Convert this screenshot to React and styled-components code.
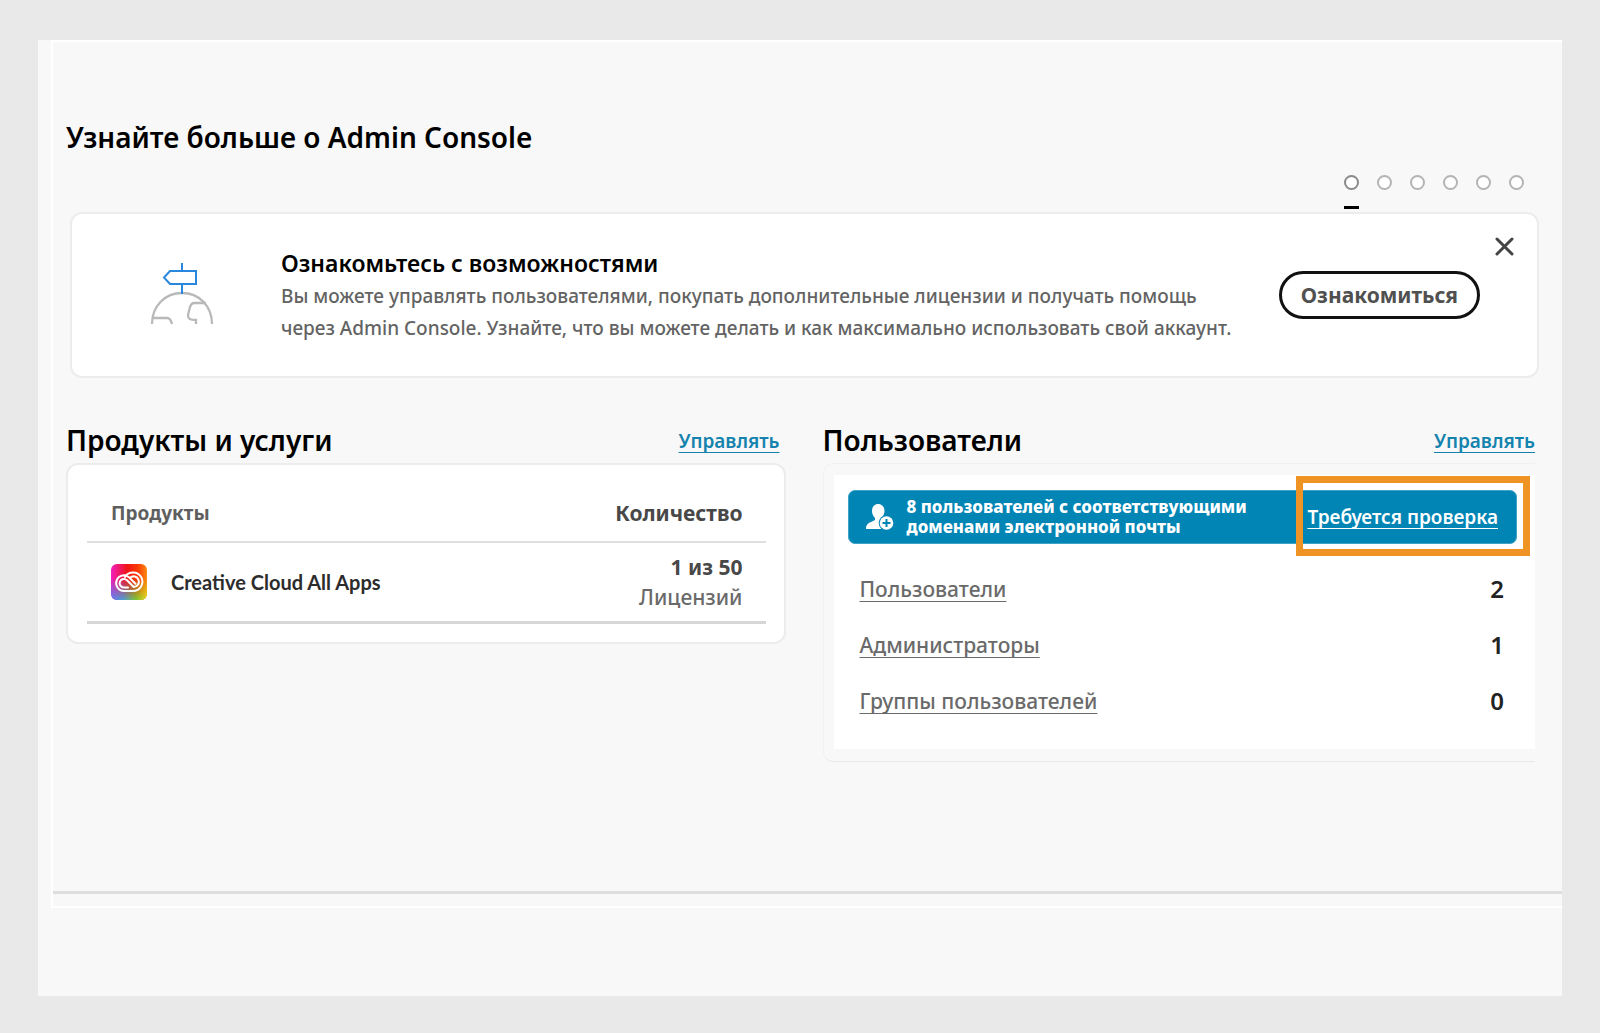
import React from "react";
import styled, { createGlobalStyle, css } from "styled-components";

const GlobalStyle = createGlobalStyle`
  *, *::before, *::after { box-sizing: border-box; }
  body {
    margin: 0;
    background: #e9e9e9;
    font-family: "Noto Sans", "Open Sans", sans-serif;
    color: #000;
  }
  h1, h2, h3, p, ul, dl, dd { margin: 0; padding: 0; }
`;

const Page = styled.div`
  min-height: 100vh;
  padding: 40px 38px 37px;
`;

const Sheet = styled.div`
  background: #f8f8f8;
  padding: 0 0 88px 13px;
`;

const Main = styled.main`
  border: 2px solid #fff;
  border-right: 0;
  padding-bottom: 12px;
`;

const Content = styled.div`
  padding: 73px 23px 129px 13px;
  border-bottom: 3px solid #dedede;
`;

const Heading = styled.h2`
  font-size: 28px;
  line-height: 45px;
  font-weight: 600;
`;

const Pager = styled.nav`
  display: flex;
  justify-content: flex-end;
  gap: 18px;
  padding: 15px 15px 0 0;
`;

const PagerDot = styled.button`
  display: flex;
  flex-direction: column;
  justify-content: space-between;
  height: 34px;
  width: 15px;
  padding: 0;
  border: 0;
  background: none;
  color: ${(p) => (p.$active ? "#8a8a8a" : "#b4b4b4")};

  &::before {
    content: "";
    width: 15px;
    height: 15px;
    border: 2px solid currentColor;
    border-radius: 50%;
    background: #fff;
  }
  &::after {
    content: "";
    width: 15px;
    height: 3px;
    background: ${(p) => (p.$active ? "#000" : "transparent")};
  }
`;

const card = css`
  background: #fff;
  border: 2px solid #ececec;
  border-radius: 12px;
`;

const Intro = styled.section`
  ${card}
  display: flex;
  align-items: center;
  position: relative;
  height: 166px;
  margin: 3px 0 0 4px;
  padding: 0 57px 0 78px;
`;

const IntroText = styled.div`
  flex: 1;
  padding-left: 67px;
`;

const IntroTitle = styled.h3`
  font-size: 23px;
  line-height: 34px;
  font-weight: 600;
`;

const IntroBody = styled.p`
  font-size: 19px;
  line-height: 32px;
  font-weight: 500;
  color: #636363;
`;

const PillButton = styled.button`
  height: 48px;
  padding: 0 19px;
  border: 3px solid #111;
  border-radius: 24px;
  background: #fff;
  font: 700 21px/28px "Noto Sans", "Open Sans", sans-serif;
  color: #505050;
`;

const CloseButton = styled.button`
  position: absolute;
  top: 22px;
  right: 22px;
  display: flex;
  padding: 0;
  border: 0;
  background: none;
`;

const Columns = styled.div`
  display: grid;
  grid-template-columns: 718fr 715fr;
  gap: 37px;
  margin-top: 40px;
  align-items: start;
`;

const ColumnHead = styled.header`
  display: flex;
  align-items: center;
  justify-content: space-between;
  padding-right: ${(p) => p.$inset || 0}px;
`;

const TextLink = styled.a`
  font-size: ${(p) => p.$size || 19}px;
  line-height: 24px;
  font-weight: ${(p) => p.$weight || 500};
  color: ${(p) => p.$color || "#1483ad"};
  text-decoration: underline;
  text-decoration-thickness: 1px;
  text-underline-offset: 4px;
  text-decoration-skip-ink: none;
`;

const ProductsCard = styled.div`
  ${card}
  height: 181px;
  padding: 19px 18px 0 19px;
`;

const Table = styled.table`
  width: 100%;
  border-collapse: collapse;

  th, td { padding: 0 23px 0 24px; text-align: left; }
  th:last-child, td:last-child { text-align: right; }
  tr > * { border-bottom: 2px solid #dfdfdf; }
  thead tr { height: 58px; }
  tbody tr { height: 80px; }
  tbody tr > * { border-bottom: 3px solid #d6d6d6; }
`;

const Th = styled.th`
  font-size: ${(p) => p.$size}px;
  font-weight: 700;
  color: ${(p) => p.$color};
`;

const Product = styled.div`
  display: flex;
  align-items: center;
  gap: 24px;
  font: 700 20px/28px Lato, "Noto Sans", sans-serif;
  color: #2c2c2c;
`;

const Quantity = styled.div`
  font-size: 21px;
  line-height: 30px;
  font-weight: ${(p) => (p.$strong ? 700 : 500)};
  color: ${(p) => (p.$strong ? "#484848" : "#6a6a6a")};
`;

const UsersFrame = styled.div`
  border: 1px solid #f1f1f1;
  border-right: 0;
  border-bottom-color: #e8e8e8;
  border-radius: 10px 0 0 10px;
  margin-right: 4px;
  padding: 11px 0 12px 10px;
`;

const UsersCard = styled.div`
  background: #fff;
  height: 274px;
  padding: 15px 18px 0 14px;
`;

const Banner = styled.div`
  display: flex;
  align-items: center;
  position: relative;
  height: 54px;
  padding: 0 18px 0 17px;
  border: 1px solid #3fa2c6;
  border-radius: 7px;
  background: #0085b5;
`;

const BannerText = styled.p`
  flex: 1;
  padding-left: 13px;
  font-size: 17px;
  line-height: 20px;
  font-weight: 800;
  color: #fff;
`;

const Highlight = styled.div`
  position: absolute;
  top: -15px;
  right: -14px;
  width: 234px;
  height: 80px;
  border: 7px solid #ef9325;
  pointer-events: none;
`;

const Counts = styled.dl`
  padding: 17px 13px 0 12px;
`;

const CountRow = styled.div`
  display: flex;
  align-items: center;
  justify-content: space-between;
  height: 56px;
`;

const Count = styled.dd`
  font-size: 24px;
  line-height: 28px;
  font-weight: 600;
  color: #222;
`;

const SignpostIcon = () => (
  <svg width="64" height="64" viewBox="0 0 64 64" fill="none" strokeWidth="2" aria-hidden="true">
    <g stroke="#b9b9b9" strokeWidth="2.300">
      <path d="M2 61C2 43 15 30 32 30S62 43 62 61" />
      <path d="M3 55h14c3 0 4 2 5 6M56 40H44c-2 0-3 1-4 4l-2 8c0 4 2 5 8 5v4" />
    </g>
    <path d="M32 0v8M32 21v10M20 8h26v13H20l-6-6.500z" stroke="#2a87de" />
  </svg>
);

const CloseIcon = () => (
  <svg width="21" height="21" viewBox="0 0 21 21" aria-hidden="true">
    <path d="M3 3l15 15M18 3L3 18" stroke="#444" strokeWidth="3" strokeLinecap="round" />
  </svg>
);

const CreativeCloudIcon = () => (
  <svg width="36" height="36" viewBox="0 0 36 36" aria-hidden="true">
    <defs>
      <linearGradient id="cc-top" x1="0" y1="0" x2="1" y2="0">
        <stop offset="0" stopColor="#f21fc0" />
        <stop offset=".45" stopColor="#ef1515" />
        <stop offset=".75" stopColor="#fb3c06" />
        <stop offset="1" stopColor="#fb8a10" />
      </linearGradient>
      <linearGradient id="cc-bottom" x1="0" y1="0" x2="1" y2="0">
        <stop offset="0" stopColor="#5c7cf2" />
        <stop offset=".35" stopColor="#4f9fd0" />
        <stop offset=".7" stopColor="#7cc832" />
        <stop offset="1" stopColor="#e6dc1c" />
      </linearGradient>
      <linearGradient id="cc-fade" x1="0" y1="0" x2="0" y2="1">
        <stop offset=".4" stopColor="#000" />
        <stop offset="1" stopColor="#fff" />
      </linearGradient>
      <mask id="cc-mask">
        <rect width="36" height="36" fill="url(#cc-fade)" />
      </mask>
    </defs>
    <rect width="36" height="36" rx="6" fill="url(#cc-top)" />
    <rect width="36" height="36" rx="6" fill="url(#cc-bottom)" mask="url(#cc-mask)" />
    <g fill="none" stroke="#fff" strokeWidth="2" strokeLinecap="round">
      <path d="M22 27h-9a7.800 7.800 0 1 1 5.500-13.300l6 6M22 27a9.300 9.300 0 1 0-8-14" />
      <path d="M17 23.500h-4a4.300 4.300 0 1 1 3-7.300l6.500 6.500M22.500 23a5.300 5.300 0 1 0-3.500-9.200" />
    </g>
  </svg>
);

const AddUserIcon = () => (
  <svg width="28" height="28" viewBox="0 0 28 28" aria-hidden="true">
    <path d="M12 1c4 0 6.500 3 6.500 7 0 3-1.500 5.500-3 7v2l3 1v8H0c0-4 2-6 5-7l4-2v-2c-1.500-1.500-3-4-3-7 0-4 2.500-7 6-7z" fill="#fff" />
    <circle cx="20.500" cy="20" r="7.800" fill="#0085b5" />
    <circle cx="20.500" cy="20" r="6.800" fill="#fff" />
    <path d="M20.500 16v8M16.500 20h8" stroke="#0085b5" strokeWidth="2" />
  </svg>
);

const slides = [1, 2, 3, 4, 5, 6];

const counts = [
  { label: "Пользователи", value: 2 },
  { label: "Администраторы", value: 1 },
  { label: "Группы пользователей", value: 0 },
];

export default function App() {
  return (
    <Page>
      <GlobalStyle />
      <Sheet>
        <Main>
          <Content>
            <Heading as="h1">Узнайте больше о Admin Console</Heading>
            <Pager>
              {slides.map((n) => (
                <PagerDot key={n} type="button" $active={n === 1} aria-label={String(n)} />
              ))}
            </Pager>
            <Intro>
              <SignpostIcon />
              <IntroText>
                <IntroTitle>Ознакомьтесь с возможностями</IntroTitle>
                <IntroBody>
                  Вы можете управлять пользователями, покупать дополнительные лицензии и получать помощь
                  <br />
                  через Admin Console. Узнайте, что вы можете делать и как максимально использовать свой аккаунт.
                </IntroBody>
              </IntroText>
              <PillButton type="button">Ознакомиться</PillButton>
              <CloseButton type="button" aria-label="Закрыть">
                <CloseIcon />
              </CloseButton>
            </Intro>

            <Columns>
              <section>
                <ColumnHead $inset={6}>
                  <Heading>Продукты и услуги</Heading>
                  <TextLink href="#products" $weight={600}>Управлять</TextLink>
                </ColumnHead>
                <ProductsCard>
                  <Table>
                    <thead>
                      <tr>
                        <Th $size={19} $color="#5f5f5f">Продукты</Th>
                        <Th $size={21} $color="#484848">Количество</Th>
                      </tr>
                    </thead>
                    <tbody>
                      <tr>
                        <td>
                          <Product>
                            <CreativeCloudIcon />
                            Creative Cloud All Apps
                          </Product>
                        </td>
                        <td>
                          <Quantity $strong>1 из 50</Quantity>
                          <Quantity>Лицензий</Quantity>
                        </td>
                      </tr>
                    </tbody>
                  </Table>
                </ProductsCard>
              </section>

              <section>
                <ColumnHead $inset={4}>
                  <Heading>Пользователи</Heading>
                  <TextLink href="#users" $weight={600}>Управлять</TextLink>
                </ColumnHead>
                <UsersFrame>
                  <UsersCard>
                    <Banner>
                      <AddUserIcon />
                      <BannerText>
                        8 пользователей с соответствующими
                        <br />
                        доменами электронной почты
                      </BannerText>
                      <TextLink href="#review" $weight={600} $color="#fff">
                        Требуется проверка
                      </TextLink>
                      <Highlight />
                    </Banner>
                    <Counts>
                      {counts.map((c) => (
                        <CountRow key={c.label}>
                          <dt>
                            <TextLink href="#list" $size={21} $color="#6a6a6a">{c.label}</TextLink>
                          </dt>
                          <Count>{c.value}</Count>
                        </CountRow>
                      ))}
                    </Counts>
                  </UsersCard>
                </UsersFrame>
              </section>
            </Columns>
          </Content>
        </Main>
      </Sheet>
    </Page>
  );
}
